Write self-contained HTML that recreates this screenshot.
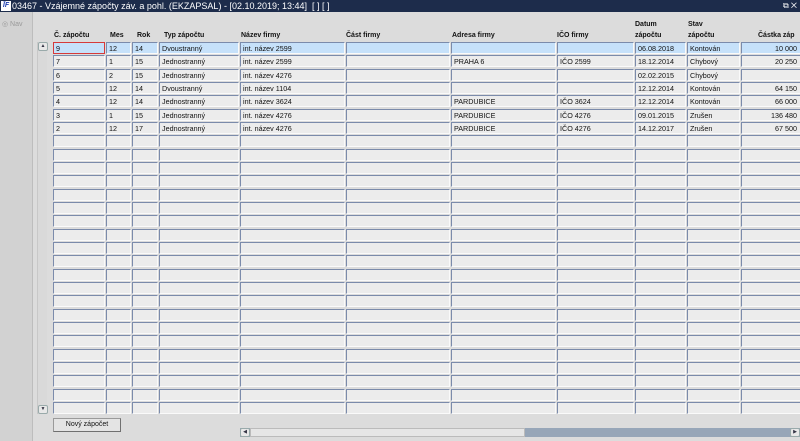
<!DOCTYPE html>
<html><head><meta charset="utf-8"><style>
*{margin:0;padding:0;box-sizing:border-box}
body{width:800px;height:441px;overflow:hidden;background:#dcdcdc;font-family:"Liberation Sans",Arial,sans-serif;font-size:7px;color:#111;position:relative}
#tb{position:absolute;left:0;top:0;width:800px;height:12px;background:#1d2c4b;color:#fff;font-size:9px;line-height:12px;padding-left:12px;white-space:nowrap}
#ic{position:absolute;left:1px;top:1px;width:10px;height:10px;background:#fff;color:#1d3fb0;font-size:7px;font-weight:bold;line-height:10px;text-align:center;font-style:italic}
#lp{position:absolute;left:0;top:12px;width:33px;height:429px;background:#d2d2d2;border-right:1px solid #bdbdbd}
#nav{position:absolute;left:2px;top:8px;color:#999;font-size:7px}
.h{position:absolute;font-weight:bold;font-size:7px;line-height:12px}
.r{position:absolute;left:0;height:12px;width:800px}
.r i{position:absolute;top:0;height:12px;background:#ececec;border-top:1px solid #7b8bab;border-left:1px solid #7b8bab;border-right:1px solid #fafafa;border-bottom:1px solid #fafafa;font-style:normal;font-size:7.2px;line-height:11px;padding-left:2px;white-space:nowrap;overflow:hidden}
.r i:nth-child(1){left:53px;width:52px}
.r i:nth-child(2){left:106px;width:25px}
.r i:nth-child(3){left:132px;width:26px}
.r i:nth-child(4){left:159px;width:80px}
.r i:nth-child(5){left:240px;width:105px}
.r i:nth-child(6){left:346px;width:104px}
.r i:nth-child(7){left:451px;width:105px}
.r i:nth-child(8){left:557px;width:77px}
.r i:nth-child(9){left:635px;width:51px}
.r i:nth-child(10){left:687px;width:53px}
.r i:nth-child(11){left:741px;width:70px;text-align:right;padding-right:13px}
.s i{background:#c6e1fa}
.s i:nth-child(1){border:1px solid #d63a3a}
#vs{position:absolute;left:37px;top:42px;width:10px;height:372px;background:#d9d9d9;border-left:1px solid #c8c8c8}
.ab{position:absolute;left:0;width:10px;height:9px;border:1px solid #9aa;background:#e8e8e8;font-size:5px;line-height:7px;text-align:center;color:#334;border-radius:2px}
#btn{position:absolute;left:53px;top:418px;width:68px;height:14px;background:#e4e4e4;border:1px solid #9a9a9a;border-right-color:#707070;border-bottom-color:#707070;font-size:7px;text-align:center;line-height:12px}
#hs{position:absolute;left:240px;top:428px;width:560px;height:9px;background:#97a6b8}
#th{position:absolute;left:10px;top:0;width:275px;height:9px;background:#e6e6e6;border:1px solid #bbb}
</style></head><body>
<div id="tb"><div id="ic">ĪF</div>03467 - Vzájemné zápočty záv. a pohl. (EKZAPSAL) - [02.10.2019; 13:44]&nbsp; [ ]&nbsp;[ ]<span style="position:absolute;right:3px;top:0;font-size:8px">⧉ ✕</span></div>
<div id="lp"><div id="nav">◎ Nav</div></div>
<div class="h" style="left:54px;top:30px">Č. zápočtu</div>
<div class="h" style="left:110px;top:30px">Mes</div>
<div class="h" style="left:137px;top:30px">Rok</div>
<div class="h" style="left:164px;top:30px">Typ zápočtu</div>
<div class="h" style="left:241px;top:30px">Název firmy</div>
<div class="h" style="left:346px;top:30px">Část firmy</div>
<div class="h" style="left:452px;top:30px">Adresa firmy</div>
<div class="h" style="left:557px;top:30px">IČO firmy</div>
<div class="h" style="left:635px;top:19px;line-height:11px">Datum<br>zápočtu</div>
<div class="h" style="left:688px;top:19px;line-height:11px">Stav<br>zápočtu</div>
<div class="h" style="left:758px;top:30px">Částka záp</div>
<div id="vs"><div class="ab" style="top:0">▲</div><div class="ab" style="bottom:0">▼</div></div>
<div class="r s" style="top:42px"><i>9</i><i>12</i><i>14</i><i>Dvoustranný</i><i>int. název 2599</i><i></i><i></i><i></i><i>06.08.2018</i><i>Kontován</i><i>10 000</i></div>
<div class="r" style="top:55.3px"><i>7</i><i>1</i><i>15</i><i>Jednostranný</i><i>int. název 2599</i><i></i><i>PRAHA 6</i><i>IČO 2599</i><i>18.12.2014</i><i>Chybový</i><i>20 250</i></div>
<div class="r" style="top:68.7px"><i>6</i><i>2</i><i>15</i><i>Jednostranný</i><i>int. název 4276</i><i></i><i></i><i></i><i>02.02.2015</i><i>Chybový</i><i></i></div>
<div class="r" style="top:82px"><i>5</i><i>12</i><i>14</i><i>Dvoustranný</i><i>int. název 1104</i><i></i><i></i><i></i><i>12.12.2014</i><i>Kontován</i><i>64 150</i></div>
<div class="r" style="top:95.3px"><i>4</i><i>12</i><i>14</i><i>Jednostranný</i><i>int. název 3624</i><i></i><i>PARDUBICE</i><i>IČO 3624</i><i>12.12.2014</i><i>Kontován</i><i>66 000</i></div>
<div class="r" style="top:108.7px"><i>3</i><i>1</i><i>15</i><i>Jednostranný</i><i>int. název 4276</i><i></i><i>PARDUBICE</i><i>IČO 4276</i><i>09.01.2015</i><i>Zrušen</i><i>136 480</i></div>
<div class="r" style="top:122px"><i>2</i><i>12</i><i>17</i><i>Jednostranný</i><i>int. název 4276</i><i></i><i>PARDUBICE</i><i>IČO 4276</i><i>14.12.2017</i><i>Zrušen</i><i>67 500</i></div>
<div class="r" style="top:135.3px"><i></i><i></i><i></i><i></i><i></i><i></i><i></i><i></i><i></i><i></i><i></i></div>
<div class="r" style="top:148.7px"><i></i><i></i><i></i><i></i><i></i><i></i><i></i><i></i><i></i><i></i><i></i></div>
<div class="r" style="top:162px"><i></i><i></i><i></i><i></i><i></i><i></i><i></i><i></i><i></i><i></i><i></i></div>
<div class="r" style="top:175.3px"><i></i><i></i><i></i><i></i><i></i><i></i><i></i><i></i><i></i><i></i><i></i></div>
<div class="r" style="top:188.7px"><i></i><i></i><i></i><i></i><i></i><i></i><i></i><i></i><i></i><i></i><i></i></div>
<div class="r" style="top:202px"><i></i><i></i><i></i><i></i><i></i><i></i><i></i><i></i><i></i><i></i><i></i></div>
<div class="r" style="top:215.3px"><i></i><i></i><i></i><i></i><i></i><i></i><i></i><i></i><i></i><i></i><i></i></div>
<div class="r" style="top:228.7px"><i></i><i></i><i></i><i></i><i></i><i></i><i></i><i></i><i></i><i></i><i></i></div>
<div class="r" style="top:242px"><i></i><i></i><i></i><i></i><i></i><i></i><i></i><i></i><i></i><i></i><i></i></div>
<div class="r" style="top:255.3px"><i></i><i></i><i></i><i></i><i></i><i></i><i></i><i></i><i></i><i></i><i></i></div>
<div class="r" style="top:268.7px"><i></i><i></i><i></i><i></i><i></i><i></i><i></i><i></i><i></i><i></i><i></i></div>
<div class="r" style="top:282px"><i></i><i></i><i></i><i></i><i></i><i></i><i></i><i></i><i></i><i></i><i></i></div>
<div class="r" style="top:295.3px"><i></i><i></i><i></i><i></i><i></i><i></i><i></i><i></i><i></i><i></i><i></i></div>
<div class="r" style="top:308.7px"><i></i><i></i><i></i><i></i><i></i><i></i><i></i><i></i><i></i><i></i><i></i></div>
<div class="r" style="top:322px"><i></i><i></i><i></i><i></i><i></i><i></i><i></i><i></i><i></i><i></i><i></i></div>
<div class="r" style="top:335.3px"><i></i><i></i><i></i><i></i><i></i><i></i><i></i><i></i><i></i><i></i><i></i></div>
<div class="r" style="top:348.7px"><i></i><i></i><i></i><i></i><i></i><i></i><i></i><i></i><i></i><i></i><i></i></div>
<div class="r" style="top:362px"><i></i><i></i><i></i><i></i><i></i><i></i><i></i><i></i><i></i><i></i><i></i></div>
<div class="r" style="top:375.3px"><i></i><i></i><i></i><i></i><i></i><i></i><i></i><i></i><i></i><i></i><i></i></div>
<div class="r" style="top:388.7px"><i></i><i></i><i></i><i></i><i></i><i></i><i></i><i></i><i></i><i></i><i></i></div>
<div class="r" style="top:402px"><i></i><i></i><i></i><i></i><i></i><i></i><i></i><i></i><i></i><i></i><i></i></div>
<div id="btn">Nový zápočet</div>
<div id="hs"><div class="ab" style="top:0;left:0;height:9px">◀</div><div id="th"></div><div class="ab" style="top:0;left:auto;right:0;height:9px">▶</div></div>
</body></html>
